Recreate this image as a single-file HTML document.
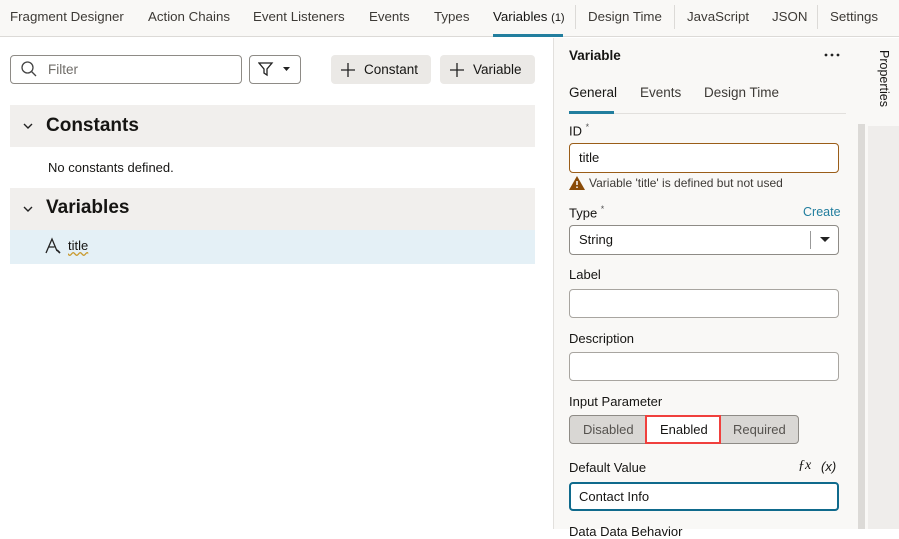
<!DOCTYPE html>
<html><head><meta charset="utf-8"><style>
*{box-sizing:border-box;margin:0;padding:0}
body{width:899px;height:529px;overflow:hidden;font-family:"Liberation Sans",sans-serif;color:#161513;background:#fff;position:relative;font-size:13px}
.a{position:absolute}
.tabs{left:0;top:0;width:899px;height:37px;background:#f9f8f6;border-bottom:1px solid #dcdad7}
.tab{position:absolute;top:9px;font-size:13.3px;color:#3d3a36;white-space:nowrap}
.sep{position:absolute;top:5px;width:1px;height:24px;background:#dcdad7}
.inp{position:absolute;background:#fff;border:1px solid #8e8b86;border-radius:4px}
.btn{position:absolute;background:#ebe9e6;border-radius:4px;font-size:13.5px;color:#161513}
.lbl{position:absolute;font-size:13px;color:#161513;left:569px}
</style></head><body>
<div class="a tabs">
<span class="tab" style="left:10px">Fragment Designer</span>
<span class="tab" style="left:148px">Action Chains</span>
<span class="tab" style="left:253px">Event Listeners</span>
<span class="tab" style="left:369px">Events</span>
<span class="tab" style="left:434px">Types</span>
<span class="tab" style="left:493px;color:#161513">Variables <span style="font-size:11px">(1)</span></span>
<div class="a" style="left:493px;top:34px;width:70px;height:3px;background:#227e9e"></div>
<div class="sep" style="left:575px"></div>
<span class="tab" style="left:588px">Design Time</span>
<div class="sep" style="left:674px"></div>
<span class="tab" style="left:687px">JavaScript</span>
<span class="tab" style="left:772px">JSON</span>
<div class="sep" style="left:817px"></div>
<span class="tab" style="left:830px">Settings</span>
</div>

<!-- left -->
<div class="inp" style="left:10px;top:55px;width:232px;height:29px"></div>
<svg class="a" style="left:20px;top:60px" width="18" height="18" viewBox="0 0 18 18"><circle cx="7.5" cy="7.5" r="5.5" fill="none" stroke="#444" stroke-width="1.3"/><path d="M11.5 11.5L16 16" stroke="#444" stroke-width="1.3"/></svg>
<span class="a" style="left:48px;top:62px;color:#6f6c68;font-size:13.5px">Filter</span>
<div class="inp" style="left:249px;top:55px;width:52px;height:29px"></div>
<svg class="a" style="left:258px;top:61px" width="36" height="16" viewBox="0 0 36 16"><path d="M1 2h13l-5 6v6l-3-2V8z" fill="none" stroke="#222" stroke-width="1.3"/><path d="M25 6h7l-3.5 4z" fill="#222"/></svg>
<div class="btn" style="left:331px;top:55px;width:100px;height:29px"><svg class="a" style="left:9px;top:7px" width="16" height="16"><path d="M8 1v14M1 8h14" stroke="#222" stroke-width="1.3"/></svg><span class="a" style="left:33px;top:7px">Constant</span></div>
<div class="btn" style="left:440px;top:55px;width:95px;height:29px"><svg class="a" style="left:9px;top:7px" width="16" height="16"><path d="M8 1v14M1 8h14" stroke="#222" stroke-width="1.3"/></svg><span class="a" style="left:33px;top:7px">Variable</span></div>

<div class="a" style="left:10px;top:105px;width:525px;height:42px;background:#f1efed"></div>
<svg class="a" style="left:23px;top:123px" width="10" height="6"><path d="M1 1l4 4 4-4" fill="none" stroke="#222" stroke-width="1.4"/></svg>
<span class="a" style="left:46px;top:115px;font-size:19px;font-weight:bold">Constants</span>
<span class="a" style="left:48px;top:160px;font-size:13px">No constants defined.</span>
<div class="a" style="left:10px;top:188px;width:525px;height:42px;background:#f1efed"></div>
<svg class="a" style="left:23px;top:206px" width="10" height="6"><path d="M1 1l4 4 4-4" fill="none" stroke="#222" stroke-width="1.4"/></svg>
<span class="a" style="left:46px;top:197px;font-size:19px;font-weight:bold">Variables</span>
<div class="a" style="left:10px;top:230px;width:525px;height:34px;background:#e4f0f6"></div>
<svg class="a" style="left:45px;top:237px" width="18" height="18" viewBox="0 0 18 18"><path d="M1 16L7 2l5 12M3.5 10h6" fill="none" stroke="#222" stroke-width="1.3"/><path d="M12 13l3 3" stroke="#222" stroke-width="1.6"/></svg>
<span class="a" style="left:68px;top:238px;font-size:13px;text-decoration:underline wavy #c99a2e">title</span>

<!-- right panel -->
<div class="a" style="left:553px;top:38px;width:315px;height:491px;background:#f9f8f6;border-left:1px solid #e2e0dd"></div>
<span class="a" style="left:569px;top:48px;font-weight:bold;font-size:13.5px">Variable</span>
<svg class="a" style="left:824px;top:53px" width="16" height="4"><circle cx="2" cy="2" r="1.4" fill="#222"/><circle cx="8" cy="2" r="1.4" fill="#222"/><circle cx="14" cy="2" r="1.4" fill="#222"/></svg>
<span class="a" style="left:569px;top:85px;font-size:13.5px">General</span>
<span class="a" style="left:640px;top:85px;font-size:13.5px;color:#3d3a36">Events</span>
<span class="a" style="left:704px;top:85px;font-size:13.5px;color:#3d3a36">Design Time</span>
<div class="a" style="left:569px;top:113px;width:277px;height:1px;background:#e2e0dd"></div>
<div class="a" style="left:569px;top:111px;width:45px;height:3px;background:#227e9e"></div>
<span class="lbl" style="top:122px">ID <sup style="font-size:9px;color:#555">*</sup></span>
<div class="inp" style="left:569px;top:143px;width:270px;height:30px;border-color:#9a5d18"><span class="a" style="left:9px;top:6px">title</span></div>
<svg class="a" style="left:569px;top:176px" width="16" height="14" viewBox="0 0 16 14"><path d="M8 0L16 14H0z" fill="#8a4b08"/><path d="M8 5v4M8 10.5v1.5" stroke="#fff" stroke-width="1.5"/></svg>
<span class="a" style="left:589px;top:176px;font-size:12px;color:#3d3a36">Variable 'title' is defined but not used</span>
<span class="lbl" style="top:204px">Type <sup style="font-size:9px;color:#555">*</sup></span>
<span class="a" style="left:803px;top:205px;color:#227e9e;font-size:12.5px">Create</span>
<div class="inp" style="left:569px;top:225px;width:270px;height:30px"><span class="a" style="left:9px;top:6px">String</span><div class="a" style="left:240px;top:5px;width:1px;height:18px;background:#999"></div><svg class="a" style="left:250px;top:11px" width="10" height="6"><path d="M0 0h10L5 5z" fill="#222"/></svg></div>
<span class="lbl" style="top:267px">Label</span>
<div class="inp" style="left:569px;top:289px;width:270px;height:29px;border-color:#a8a5a0"></div>
<span class="lbl" style="top:331px">Description</span>
<div class="inp" style="left:569px;top:352px;width:270px;height:29px;border-color:#a8a5a0"></div>
<span class="lbl" style="top:394px">Input Parameter</span>
<div class="a" style="left:569px;top:415px;width:230px;height:29px;background:#d9d7d4;border:1px solid #8e8b86;border-radius:4px"></div>
<span class="a" style="left:583px;top:422px;color:#55524e">Disabled</span>
<div class="a" style="left:645px;top:415px;width:76px;height:29px;background:#fff;border:2px solid #f0403d"></div>
<span class="a" style="left:660px;top:422px">Enabled</span>
<span class="a" style="left:733px;top:422px;color:#55524e">Required</span>
<span class="lbl" style="top:460px">Default Value</span>
<span class="a" style="left:798px;top:458px;font-style:italic;font-family:'Liberation Serif',serif;font-size:14px">ƒx</span>
<span class="a" style="left:821px;top:459px;font-style:italic">(x)</span>
<div class="inp" style="left:569px;top:482px;width:270px;height:29px;border:2px solid #0f6a8c"><span class="a" style="left:8px;top:5px">Contact Info</span></div>
<span class="lbl" style="top:524px">Data Data Behavior</span>

<!-- scrollbar & strip -->
<div class="a" style="left:858px;top:124px;width:7px;height:405px;background:#dcdad7"></div>
<div class="a" style="left:868px;top:38px;width:31px;height:491px;background:#efedeb"></div>
<div class="a" style="left:868px;top:38px;width:31px;height:88px;background:#f9f8f6"></div>
<span class="a" style="left:877px;top:50px;writing-mode:vertical-rl;font-size:12.5px">Properties</span>
</body></html>
